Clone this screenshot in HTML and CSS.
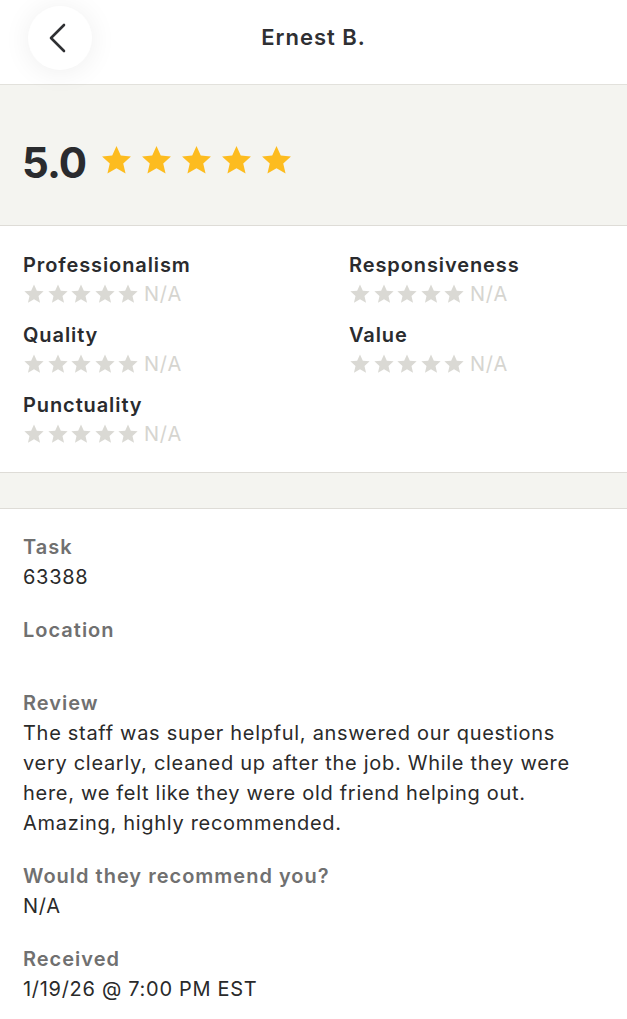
FILE: index.html
```html
<!DOCTYPE html>
<html>
<head>
<meta charset="utf-8">
<link rel="stylesheet" href="styles.css">
</head>
<body>
<div class="page">
  <header class="header">
    <button class="back" aria-label="Back">
      <svg width="20" height="30" viewBox="0 0 20 30"><path d="M16 2 L3 15 L16 28" fill="none" stroke="#2f3033" stroke-width="2.6" stroke-linecap="round" stroke-linejoin="round"/></svg>
    </button>
    <h1 class="title">Ernest B.</h1>
  </header>

  <section class="overall">
    <span class="score">5.0</span>
    <div class="stars big">
      <svg viewBox="0 0 24 24"><path d="M12 1.5l3.1 6.9 7.4.7-5.6 5 1.7 7.4L12 17.6l-6.6 3.9 1.7-7.4-5.6-5 7.4-.7z"/></svg>
      <svg viewBox="0 0 24 24"><path d="M12 1.5l3.1 6.9 7.4.7-5.6 5 1.7 7.4L12 17.6l-6.6 3.9 1.7-7.4-5.6-5 7.4-.7z"/></svg>
      <svg viewBox="0 0 24 24"><path d="M12 1.5l3.1 6.9 7.4.7-5.6 5 1.7 7.4L12 17.6l-6.6 3.9 1.7-7.4-5.6-5 7.4-.7z"/></svg>
      <svg viewBox="0 0 24 24"><path d="M12 1.5l3.1 6.9 7.4.7-5.6 5 1.7 7.4L12 17.6l-6.6 3.9 1.7-7.4-5.6-5 7.4-.7z"/></svg>
      <svg viewBox="0 0 24 24"><path d="M12 1.5l3.1 6.9 7.4.7-5.6 5 1.7 7.4L12 17.6l-6.6 3.9 1.7-7.4-5.6-5 7.4-.7z"/></svg>
    </div>
  </section>

  <section class="subratings">
    <div class="sub">
      <div class="sub-label">Professionalism</div>
      <div class="sub-row"><div class="stars small">
        <svg viewBox="0 0 24 24"><path d="M12 1.5l3.1 6.9 7.4.7-5.6 5 1.7 7.4L12 17.6l-6.6 3.9 1.7-7.4-5.6-5 7.4-.7z"/></svg>
        <svg viewBox="0 0 24 24"><path d="M12 1.5l3.1 6.9 7.4.7-5.6 5 1.7 7.4L12 17.6l-6.6 3.9 1.7-7.4-5.6-5 7.4-.7z"/></svg>
        <svg viewBox="0 0 24 24"><path d="M12 1.5l3.1 6.9 7.4.7-5.6 5 1.7 7.4L12 17.6l-6.6 3.9 1.7-7.4-5.6-5 7.4-.7z"/></svg>
        <svg viewBox="0 0 24 24"><path d="M12 1.5l3.1 6.9 7.4.7-5.6 5 1.7 7.4L12 17.6l-6.6 3.9 1.7-7.4-5.6-5 7.4-.7z"/></svg>
        <svg viewBox="0 0 24 24"><path d="M12 1.5l3.1 6.9 7.4.7-5.6 5 1.7 7.4L12 17.6l-6.6 3.9 1.7-7.4-5.6-5 7.4-.7z"/></svg>
      </div><span class="na">N/A</span></div>
    </div>
    <div class="sub">
      <div class="sub-label">Responsiveness</div>
      <div class="sub-row"><div class="stars small">
        <svg viewBox="0 0 24 24"><path d="M12 1.5l3.1 6.9 7.4.7-5.6 5 1.7 7.4L12 17.6l-6.6 3.9 1.7-7.4-5.6-5 7.4-.7z"/></svg>
        <svg viewBox="0 0 24 24"><path d="M12 1.5l3.1 6.9 7.4.7-5.6 5 1.7 7.4L12 17.6l-6.6 3.9 1.7-7.4-5.6-5 7.4-.7z"/></svg>
        <svg viewBox="0 0 24 24"><path d="M12 1.5l3.1 6.9 7.4.7-5.6 5 1.7 7.4L12 17.6l-6.6 3.9 1.7-7.4-5.6-5 7.4-.7z"/></svg>
        <svg viewBox="0 0 24 24"><path d="M12 1.5l3.1 6.9 7.4.7-5.6 5 1.7 7.4L12 17.6l-6.6 3.9 1.7-7.4-5.6-5 7.4-.7z"/></svg>
        <svg viewBox="0 0 24 24"><path d="M12 1.5l3.1 6.9 7.4.7-5.6 5 1.7 7.4L12 17.6l-6.6 3.9 1.7-7.4-5.6-5 7.4-.7z"/></svg>
      </div><span class="na">N/A</span></div>
    </div>
    <div class="sub">
      <div class="sub-label">Quality</div>
      <div class="sub-row"><div class="stars small">
        <svg viewBox="0 0 24 24"><path d="M12 1.5l3.1 6.9 7.4.7-5.6 5 1.7 7.4L12 17.6l-6.6 3.9 1.7-7.4-5.6-5 7.4-.7z"/></svg>
        <svg viewBox="0 0 24 24"><path d="M12 1.5l3.1 6.9 7.4.7-5.6 5 1.7 7.4L12 17.6l-6.6 3.9 1.7-7.4-5.6-5 7.4-.7z"/></svg>
        <svg viewBox="0 0 24 24"><path d="M12 1.5l3.1 6.9 7.4.7-5.6 5 1.7 7.4L12 17.6l-6.6 3.9 1.7-7.4-5.6-5 7.4-.7z"/></svg>
        <svg viewBox="0 0 24 24"><path d="M12 1.5l3.1 6.9 7.4.7-5.6 5 1.7 7.4L12 17.6l-6.6 3.9 1.7-7.4-5.6-5 7.4-.7z"/></svg>
        <svg viewBox="0 0 24 24"><path d="M12 1.5l3.1 6.9 7.4.7-5.6 5 1.7 7.4L12 17.6l-6.6 3.9 1.7-7.4-5.6-5 7.4-.7z"/></svg>
      </div><span class="na">N/A</span></div>
    </div>
    <div class="sub">
      <div class="sub-label">Value</div>
      <div class="sub-row"><div class="stars small">
        <svg viewBox="0 0 24 24"><path d="M12 1.5l3.1 6.9 7.4.7-5.6 5 1.7 7.4L12 17.6l-6.6 3.9 1.7-7.4-5.6-5 7.4-.7z"/></svg>
        <svg viewBox="0 0 24 24"><path d="M12 1.5l3.1 6.9 7.4.7-5.6 5 1.7 7.4L12 17.6l-6.6 3.9 1.7-7.4-5.6-5 7.4-.7z"/></svg>
        <svg viewBox="0 0 24 24"><path d="M12 1.5l3.1 6.9 7.4.7-5.6 5 1.7 7.4L12 17.6l-6.6 3.9 1.7-7.4-5.6-5 7.4-.7z"/></svg>
        <svg viewBox="0 0 24 24"><path d="M12 1.5l3.1 6.9 7.4.7-5.6 5 1.7 7.4L12 17.6l-6.6 3.9 1.7-7.4-5.6-5 7.4-.7z"/></svg>
        <svg viewBox="0 0 24 24"><path d="M12 1.5l3.1 6.9 7.4.7-5.6 5 1.7 7.4L12 17.6l-6.6 3.9 1.7-7.4-5.6-5 7.4-.7z"/></svg>
      </div><span class="na">N/A</span></div>
    </div>
    <div class="sub">
      <div class="sub-label">Punctuality</div>
      <div class="sub-row"><div class="stars small">
        <svg viewBox="0 0 24 24"><path d="M12 1.5l3.1 6.9 7.4.7-5.6 5 1.7 7.4L12 17.6l-6.6 3.9 1.7-7.4-5.6-5 7.4-.7z"/></svg>
        <svg viewBox="0 0 24 24"><path d="M12 1.5l3.1 6.9 7.4.7-5.6 5 1.7 7.4L12 17.6l-6.6 3.9 1.7-7.4-5.6-5 7.4-.7z"/></svg>
        <svg viewBox="0 0 24 24"><path d="M12 1.5l3.1 6.9 7.4.7-5.6 5 1.7 7.4L12 17.6l-6.6 3.9 1.7-7.4-5.6-5 7.4-.7z"/></svg>
        <svg viewBox="0 0 24 24"><path d="M12 1.5l3.1 6.9 7.4.7-5.6 5 1.7 7.4L12 17.6l-6.6 3.9 1.7-7.4-5.6-5 7.4-.7z"/></svg>
        <svg viewBox="0 0 24 24"><path d="M12 1.5l3.1 6.9 7.4.7-5.6 5 1.7 7.4L12 17.6l-6.6 3.9 1.7-7.4-5.6-5 7.4-.7z"/></svg>
      </div><span class="na">N/A</span></div>
    </div>
  </section>

  <div class="spacer"></div>

  <section class="details">
    <div class="field">
      <div class="field-label">Task</div>
      <div class="field-value">63388</div>
    </div>
    <div class="field">
      <div class="field-label">Location</div>
      <div class="field-value empty"></div>
    </div>
    <div class="field">
      <div class="field-label">Review</div>
      <div class="field-value">The staff was super helpful, answered our questions very clearly, cleaned up after the job. While they were here, we felt like they were old friend helping out. Amazing, highly recommended.</div>
    </div>
    <div class="field">
      <div class="field-label">Would they recommend you?</div>
      <div class="field-value">N/A</div>
    </div>
    <div class="field">
      <div class="field-label">Received</div>
      <div class="field-value">1/19/26 @ 7:00 PM EST</div>
    </div>
  </section>
</div>
</body>
</html>
```

FILE: styles.css
```css
* { box-sizing: border-box; }
html, body { margin: 0; padding: 0; background: #ffffff; }
body {
  font-family: Inter, "Noto Sans", sans-serif;
  color: #2f3033;
  width: 627px;
}
.page { display: flex; flex-direction: column; }

.header {
  height: 85px;
  display: flex;
  align-items: center;
  justify-content: center;
  position: relative;
  border-bottom: 1px solid #e2e1dc;
  background: #fff;
}
.back {
  position: absolute;
  left: 28px;
  top: 6px;
  width: 64px;
  height: 64px;
  border-radius: 50%;
  border: none;
  background: #fff;
  box-shadow: 0 2px 28px rgba(0, 0, 0, 0.07);
  display: flex;
  align-items: center;
  justify-content: center;
  padding: 0 4px 0 0;
}
.title {
  margin: -10px 0 0 0;
  font-size: 22px;
  font-weight: 600;
  letter-spacing: 1px;
}

.overall {
  height: 141px;
  background: #f4f4f0;
  border-bottom: 1px solid #dedcd7;
  display: flex;
  align-items: center;
  padding: 14px 0 0 22px;
  gap: 14px;
}
.score {
  font-size: 42px;
  font-weight: 700;
  letter-spacing: -1px;
  color: #2a2b2e;
}
.stars { display: flex; }
.stars svg { display: block; }
.stars.big { gap: 7px; margin-top: -4px; }
.stars.big svg { width: 33px; height: 33px; fill: #fdbc1f; }
.stars.small { gap: 1.5px; }
.stars.small svg { width: 22px; height: 22px; fill: #dad9d4; }

.subratings {
  display: grid;
  grid-template-columns: 326px 1fr;
  row-gap: 14px;
  padding: 25px 23px 25px 23px;
  border-bottom: 1px solid #dedcd7;
}
.sub-label {
  font-size: 20px;
  font-weight: 600;
  line-height: 28px;
  letter-spacing: 0.9px;
  color: #2a2b2e;
}
.sub-row {
  display: flex;
  align-items: center;
  height: 28px;
  padding-top: 2px;
  gap: 5px;
}
.na {
  font-size: 20px;
  color: #d6d5d0;
  line-height: 28px;
  letter-spacing: 0.8px;
}

.spacer {
  height: 36px;
  background: #f4f4f0;
  border-bottom: 1px solid #dedcd7;
}

.details {
  padding: 23px 23px 20px 23px;
  display: flex;
  flex-direction: column;
  gap: 23px;
}
.field-label {
  font-size: 20px;
  font-weight: 600;
  line-height: 30px;
  letter-spacing: 1px;
  color: #707070;
}
.field-value {
  font-size: 20px;
  line-height: 30px;
  letter-spacing: 0.7px;
  color: #2a2a2a;
}
.field-value.empty { height: 20px; }
```
